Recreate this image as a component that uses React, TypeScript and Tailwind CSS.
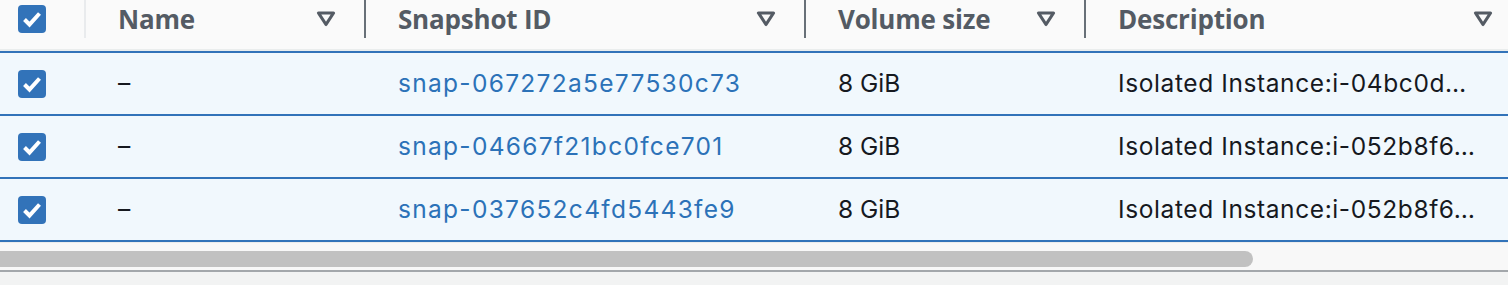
import React from "react";

const Check = () => (
  <div className="w-[28px] h-[28px] rounded-[4px] bg-[#3273b9] flex items-center justify-center shrink-0">
    <svg width="28" height="28" viewBox="0 0 28 28">
      <polyline points="6.5,14.5 11.5,19.5 21.5,8.5" fill="none" stroke="#ffffff" strokeWidth="4" strokeLinejoin="miter" />
    </svg>
  </div>
);

const Sort = () => (
  <svg width="20" height="16" viewBox="0 0 20 16" className="shrink-0">
    <polygon points="2.5,2 17.5,2 10,13.5" fill="none" stroke="#545b64" strokeWidth="3.2" strokeLinejoin="round" />
  </svg>
);

const rows = [
  { id: "snap-067272a5e77530c73", desc: "Isolated Instance:i-04bc0d…" },
  { id: "snap-04667f21bc0fce701", desc: "Isolated Instance:i-052b8f6…" },
  { id: "snap-037652c4fd5443fe9", desc: "Isolated Instance:i-052b8f6…" },
];

const font = { fontFamily: "'Open Sans', 'Noto Sans', sans-serif" };
const body = { fontFamily: "Inter, 'Open Sans', sans-serif" };

export default function App() {
  return (
    <div className="w-[1508px] h-[285px] overflow-hidden bg-[#f2f3f3]" style={font}>
      <div className="w-[1523px]">
        {/* header */}
        <div className="flex h-[51px] bg-[#fafafa] border-b-2 border-[#eaeded]">
          <div className="w-[86px] h-[38px] flex items-center shrink-0">
            <div className="pl-[18px] flex-1">
              <Check />
            </div>
            <div className="w-[2px] h-[38px] bg-[#e9ebed]" />
          </div>
          {[
            { t: "Name", w: "w-[280px]" },
            { t: "Snapshot ID", w: "w-[440px]" },
            { t: "Volume size", w: "w-[280px]" },
            { t: "Description", w: "w-[437px]" },
          ].map((c) => (
            <div key={c.t} className={`${c.w} h-[38px] flex items-center shrink-0`}>
              <div className="flex-1 pl-[32px] text-[26px] font-bold text-[#545b64] leading-none tracking-[-0.2px]">{c.t}</div>
              <Sort />
              <div className="w-[28px]" />
              <div className="w-[2px] h-[38px] bg-[#687078]" />
            </div>
          ))}
        </div>
        {/* rows */}
        <div className="border-t-2 border-[#3273b9]">
          {rows.map((r) => (
            <div key={r.id} className="flex h-[63px] items-center bg-[#f1f8fd] border-b-2 border-[#3273b9] text-[24.5px] text-[#16191f]" style={body}>
              <div className="w-[86px] pl-[18px] shrink-0">
                <Check />
              </div>
              <div className="w-[280px] pl-[32px] shrink-0">–</div>
              <div className="w-[440px] pl-[32px] shrink-0 text-[#2c72b8] tracking-[1.3px]">{r.id}</div>
              <div className="w-[280px] pl-[32px] shrink-0">8 GiB</div>
              <div className="w-[437px] pl-[32px] shrink-0 whitespace-nowrap tracking-[0.6px]">{r.desc}</div>
            </div>
          ))}
        </div>
        {/* scrollbar */}
        <div className="h-[30px] w-[1508px] bg-[#f8f8f8] border-t border-[#ececec] pt-[8px] border-b-2 border-b-[#a3a7ab]">
          <div className="w-[1253px] h-[16px] bg-[#c1c1c1] rounded-r-full" />
        </div>
      </div>
    </div>
  );
}
